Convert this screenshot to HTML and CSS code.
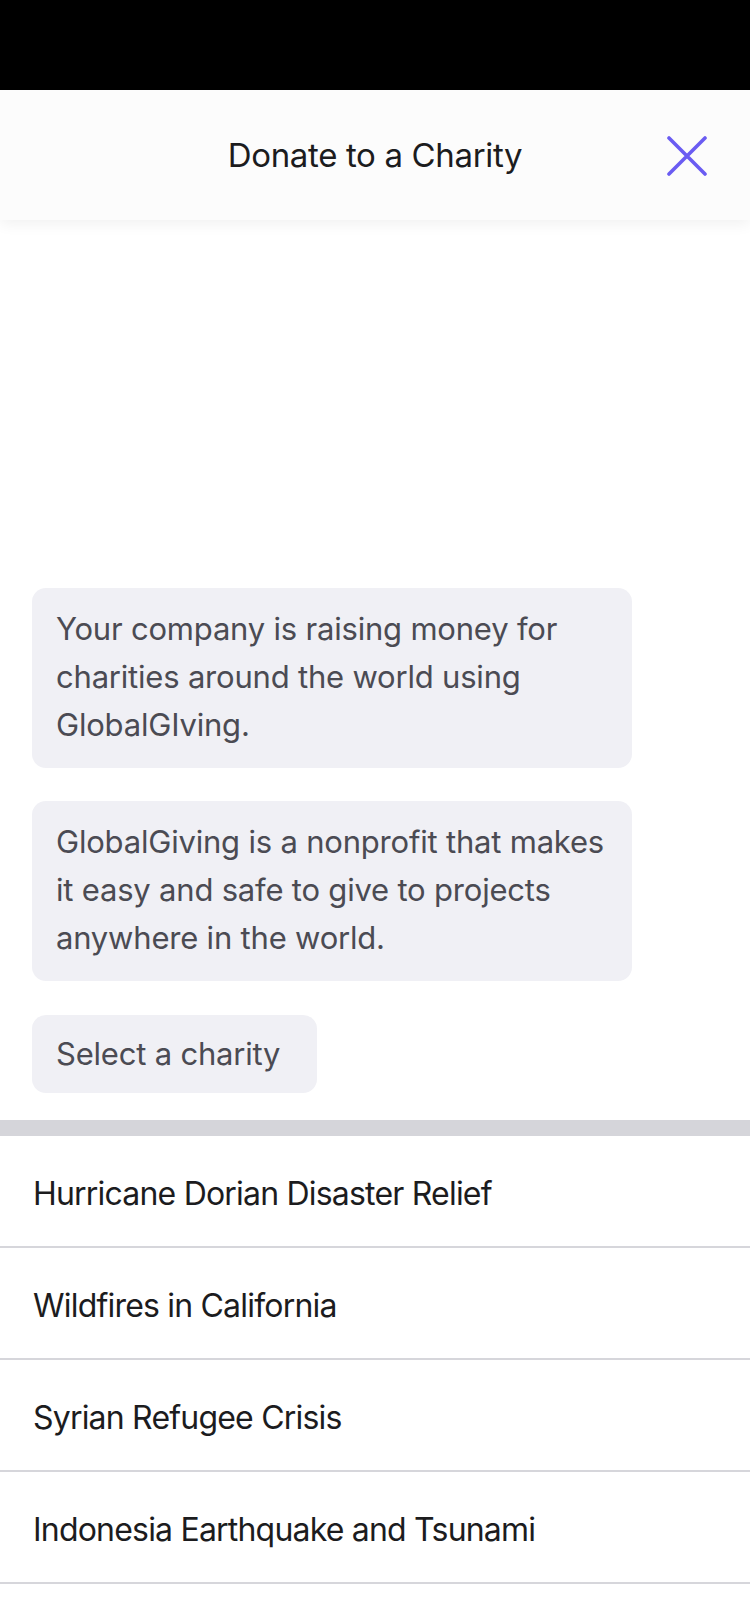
FILE: index.html
```html
<!DOCTYPE html>
<html lang="en">
<head>
<meta charset="utf-8">
<title>Donate to a Charity</title>
<link rel="stylesheet" href="styles.css">
</head>
<body>
<div class="screen">
  <div class="status-bar"></div>
  <header class="nav">
    <h1 class="nav-title">Donate to a Charity</h1>
    <button class="close-btn" aria-label="Close">
      <svg width="40" height="40" viewBox="0 0 40 40" fill="none" stroke="#6a5cf2" stroke-width="3.6" stroke-linecap="round">
        <path d="M2 2 L38 38 M38 2 L2 38"/>
      </svg>
    </button>
  </header>
  <main class="chat">
    <div class="bubble bubble-wide">Your company is raising money for charities around the world using GlobalGIving.</div>
    <div class="bubble bubble-wide">GlobalGiving is a nonprofit that makes it easy and safe to give to projects anywhere in the world.</div>
    <div class="bubble bubble-short">Select a charity</div>
  </main>
  <div class="divider-band"></div>
  <ul class="charity-list">
    <li class="charity-item">Hurricane Dorian Disaster Relief</li>
    <li class="charity-item">Wildfires in California</li>
    <li class="charity-item">Syrian Refugee Crisis</li>
    <li class="charity-item">Indonesia Earthquake and Tsunami</li>
  </ul>
</div>
</body>
</html>
```
FILE: styles.css
```css
* { box-sizing: border-box; }
html, body {
  margin: 0;
  padding: 0;
  background: #ffffff;
}
body {
  font-family: Inter, "Noto Sans", "Liberation Sans", sans-serif;
}
.screen {
  width: 750px;
  height: 1624px;
  overflow: hidden;
  display: flex;
  flex-direction: column;
  background: #ffffff;
}
.status-bar {
  height: 90px;
  background: #000000;
  flex: none;
}
.nav {
  position: relative;
  z-index: 1;
  height: 130px;
  flex: none;
  background: #fcfcfc;
  box-shadow: 0 4px 14px rgba(0, 0, 0, 0.06);
  display: flex;
  align-items: center;
  justify-content: center;
}
.nav-title {
  margin: 0;
  font-size: 33px;
  font-weight: 400;
  letter-spacing: -0.35px;
  color: #1c1c1e;
  padding-top: 0;
}
.close-btn {
  position: absolute;
  right: 43px;
  top: 46px;
  width: 40px;
  height: 40px;
  padding: 0;
  border: 0;
  background: none;
  display: flex;
}
.chat {
  height: 900px;
  flex: none;
  display: flex;
  flex-direction: column;
  justify-content: flex-end;
  align-items: flex-start;
  gap: 33px;
  padding: 0 0 27px 32px;
}
.bubble {
  max-width: 600px;
  background: #f0f0f5;
  border-radius: 14px;
  font-size: 31px;
  line-height: 48px;
  letter-spacing: -0.2px;
  color: #4b4b53;
}
.bubble-wide {
  width: 600px;
  padding: 17px 24px 19px;
}
.bubble-short {
  margin-top: 1px;
  padding: 15px 37px 15px 24px;
}
.divider-band {
  height: 16px;
  flex: none;
  background: #d5d5da;
}
.charity-list {
  list-style: none;
  margin: 0;
  padding: 0;
}
.charity-item {
  height: 112px;
  display: flex;
  align-items: center;
  padding: 4px 0 0 33px;
  border-bottom: 2px solid #d6d6db;
  font-size: 32px;
  letter-spacing: -0.8px;
  color: #1c1c1e;
}
```
